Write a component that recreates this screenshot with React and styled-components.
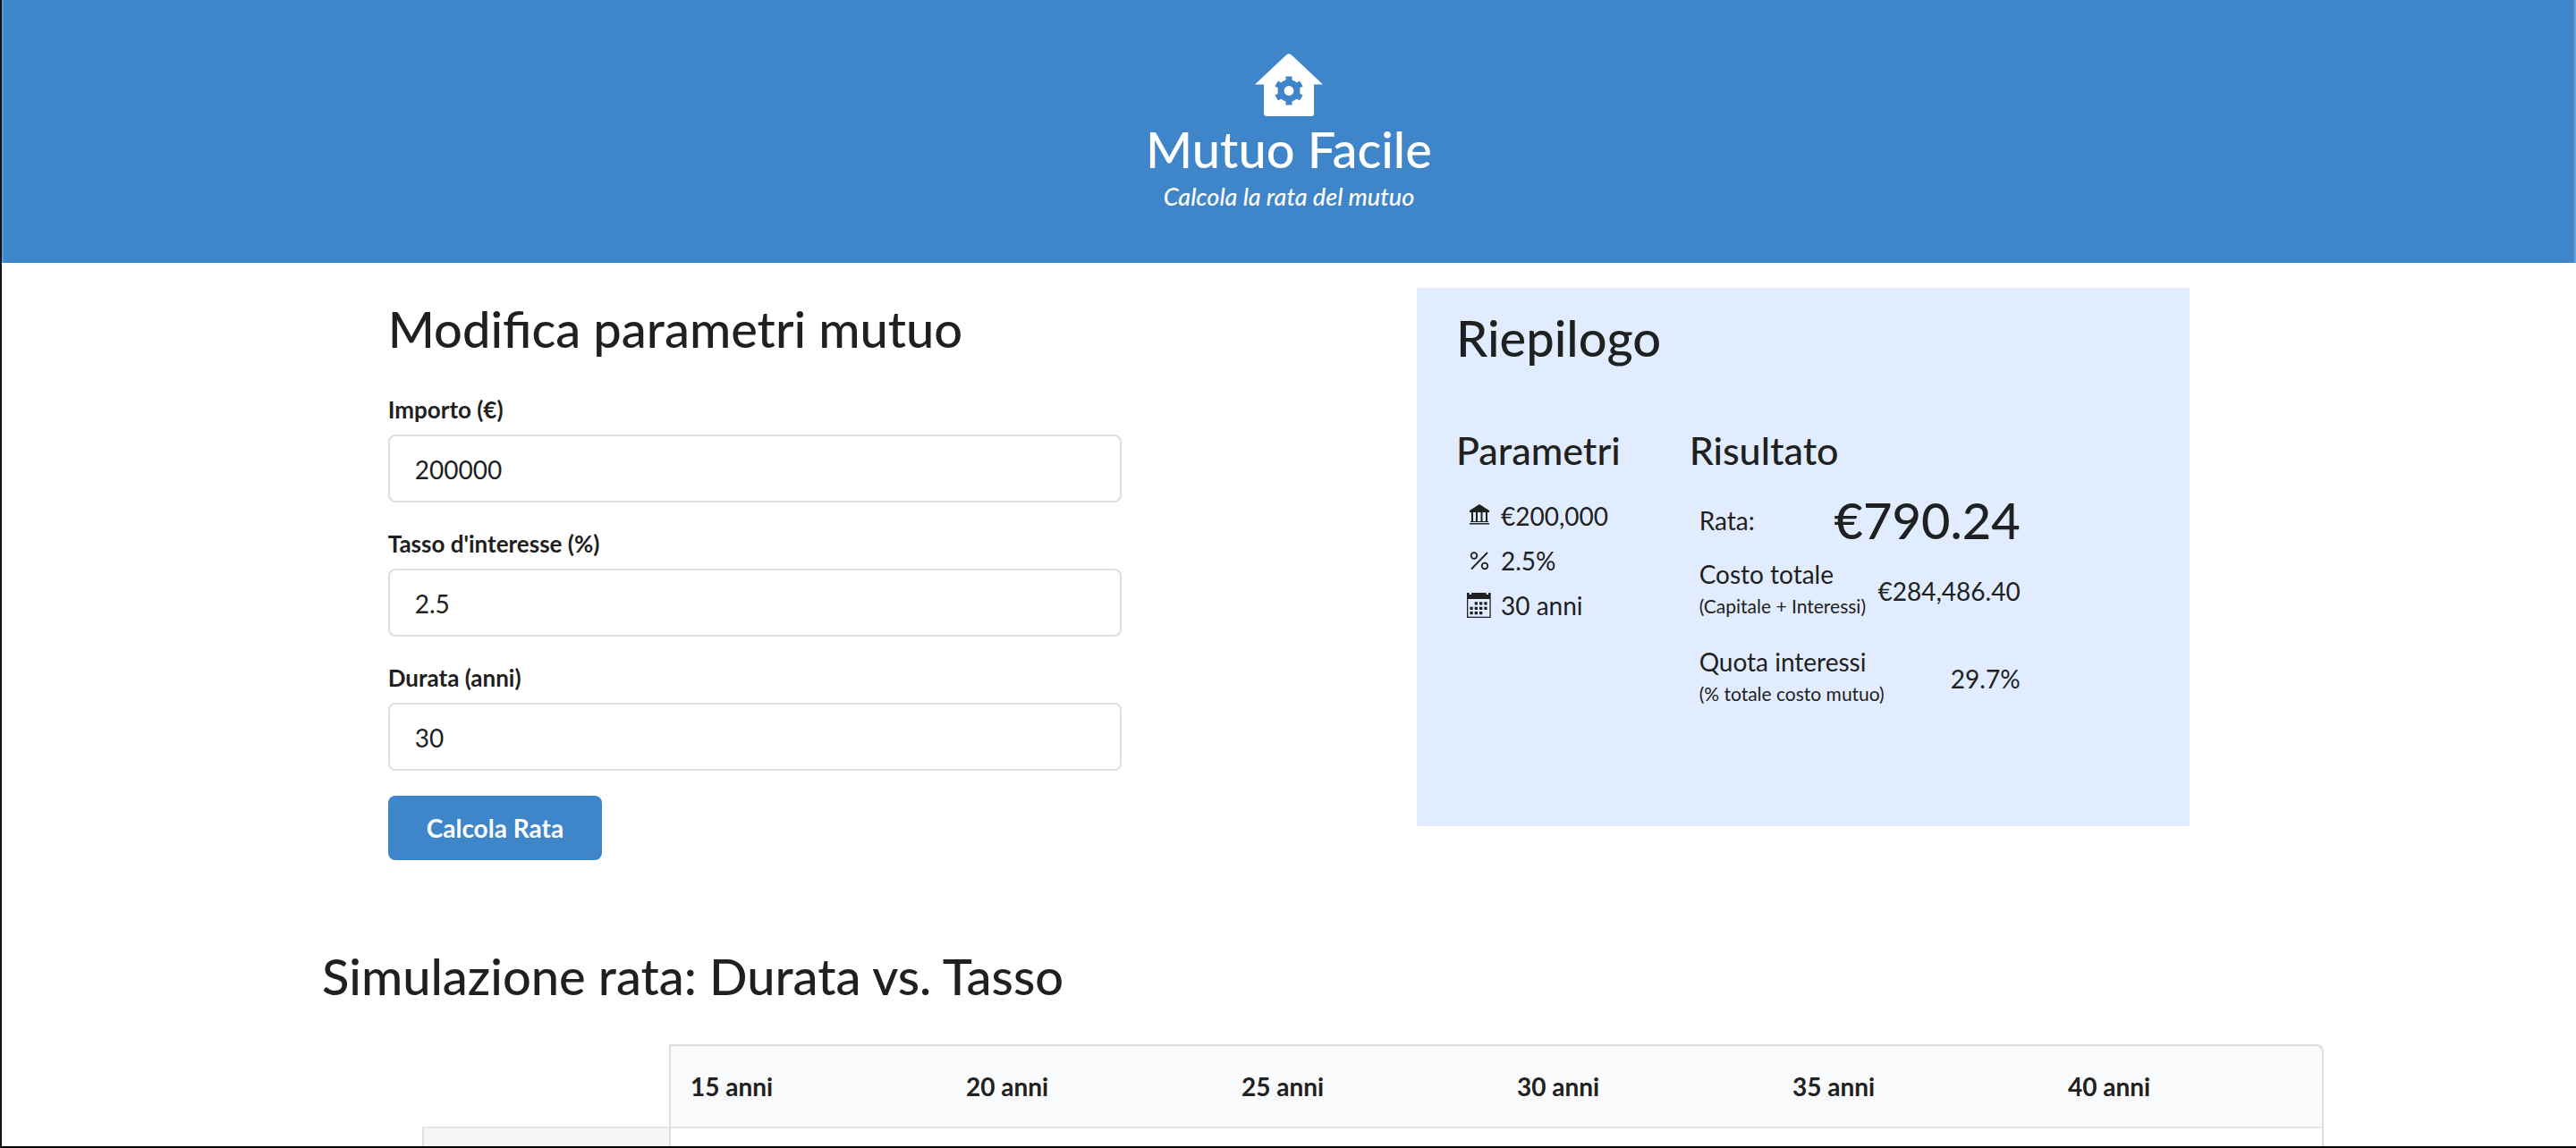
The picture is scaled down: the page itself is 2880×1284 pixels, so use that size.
import React from 'react';
import styled, { createGlobalStyle } from 'styled-components';

const Global = createGlobalStyle`
  *, *::before, *::after { box-sizing: border-box; }
  body {
    margin: 0;
    background: #fff;
    color: #1f2121;
    font-family: Lato, 'Helvetica Neue', Arial, sans-serif;
    font-size: 28px;
    line-height: 40px;
  }
`;

const Frame = styled.div`
  height: 100vh;
  overflow: hidden;
  border-left: 2px solid #10161f;
  border-bottom: 2px solid #000;
`;

const Header = styled.header`
  display: flex;
  flex-direction: column;
  align-items: center;
  padding: 56px 0;
  background: #3f85ca;
  border-left: 2px solid #5d98d2;
  border-right: 2px solid #6ba1d8;
  color: #fff;
`;

const Logo = styled.svg`
  width: 76px;
  height: 76px;
`;

const Title = styled.h1`
  margin: 0;
  font-size: 56px;
  line-height: 70px;
  font-weight: 500;
`;

const Tagline = styled.p`
  margin: 0;
  font-size: 27px;
  line-height: 36px;
  font-style: italic;
  font-weight: 500;
`;

const Overview = styled.main`
  display: grid;
  grid-template-columns: 820fr 864fr;
  column-gap: 330px;
  align-items: start;
  padding: 28px 15% 0;
`;

const Heading = styled.h2`
  margin: 0;
  font-size: 56px;
  line-height: 72px;
  font-weight: 500;
`;

const Form = styled.form`
  padding-top: 10px;
`;

const Field = styled.div`
  display: flex;
  flex-direction: column;
  gap: 10px;
  margin-bottom: 28px;
  &:first-of-type { margin-top: 36px; }
`;

const Label = styled.label`
  font-size: 26px;
  line-height: 36px;
  font-weight: 700;
`;

const Input = styled.input`
  width: 100%;
  height: 76px;
  padding: 2px 28px 0;
  border: 2px solid #dededf;
  border-radius: 8px;
  background: #fff;
  color: inherit;
  font: inherit;
`;

const Button = styled.button`
  height: 72px;
  padding: 0 43px;
  border: 0;
  border-radius: 8px;
  background: #3f85ca;
  color: #fff;
  font: inherit;
  font-weight: 700;
`;

const Card = styled.section`
  padding: 20px 44px 116px;
  background: #e1edff;
`;

const CardColumns = styled.div`
  display: flex;
  gap: 77px;
  margin-top: 62px;
`;

const SubHeading = styled.h3`
  margin: 0 0 20px;
  font-size: 43px;
  line-height: 56px;
  font-weight: 500;
`;

const ParamList = styled.ul`
  margin: 0;
  padding: 0 0 0 10px;
  list-style: none;
`;

const Param = styled.li`
  display: flex;
  align-items: center;
  gap: 10px;
  line-height: 50px;
`;

const Icon = styled.svg`
  width: 30px;
  height: 30px;
  fill: currentColor;
`;

const Results = styled.dl`
  width: 370px;
  margin: 0;
  padding-left: 11px;
`;

const Result = styled.div`
  display: flex;
  align-items: center;
  justify-content: space-between;
  height: ${(p) => (p.$large ? '60px' : '98px')};
  white-space: nowrap;
`;

const ResultName = styled.dt`
  line-height: 34px;
`;

const ResultValue = styled.dd`
  margin: 0;
  font-size: ${(p) => (p.$large ? '56px' : '28px')};
  line-height: 56px;
  font-weight: ${(p) => (p.$large ? 500 : 400)};
`;

const Note = styled.small`
  display: block;
  font-size: 21px;
  line-height: 38px;
`;

const Simulation = styled.section`
  padding: 94px 282px 0 358px;
`;

const Rates = styled.table`
  width: calc(100% - 112px);
  margin: 40px 0 0 112px;
  border-collapse: separate;
  border-spacing: 0;
  table-layout: fixed;
`;

const Corner = styled.td`
  width: 278px;
  border-right: 2px solid #dededf;
`;

const Term = styled.th`
  height: 92px;
  padding: 0 22px;
  border-top: 2px solid #dededf;
  background: #f9fafb;
  text-align: left;
  font-weight: 700;
  &:last-child {
    border-right: 2px solid #dededf;
    border-top-right-radius: 8px;
  }
`;

const RateName = styled.th`
  height: 92px;
  border: 2px solid #dededf;
  border-top-color: #e6e6e6;
  border-bottom: 0;
  background: #f6f6f6;
`;

const Rate = styled.td`
  border-top: 2px solid #e4e5e6;
  &:last-child { border-right: 2px solid #dededf; }
`;

const HouseGear = () => (
  <Logo viewBox="0 0 76 76" aria-hidden="true">
    <path
      fill="#fff"
      d="M0 38.5 35 5.6Q38 3 41 5.6L76 38.5H66V71Q66 74 63 74H13Q10 74 10 71V38.5Z"
    />
    <g fill="#3f85ca">
      <circle cx="38" cy="45.5" r="12.5" />
      {[0, 60, 120].map((a) => (
        <rect key={a} x="34.5" y="29.5" width="7" height="32" transform={`rotate(${a} 38 45.5)`} />
      ))}
    </g>
    <circle cx="38" cy="45.5" r="5.4" fill="#fff" />
  </Logo>
);

const Bank = () => (
  <Icon viewBox="0 0 30 30" aria-hidden="true">
    <path d="M16 2 27 9V11H5V9ZM7 11H9V22H7ZM12 11H14V22H12ZM17.500 11H19.500V22H17.500ZM23 11H25V22H23ZM6 21H26V22H6ZM5 23H27V24.500H5Z" />
  </Icon>
);

const Percent = () => (
  <Icon viewBox="0 0 30 30" aria-hidden="true">
    <g fill="none" stroke="currentColor" strokeWidth="1.8">
      <circle cx="10" cy="9.500" r="3.3" />
      <circle cx="22" cy="21" r="3.3" />
      <path d="M25 6 7 24.500" />
    </g>
  </Icon>
);

const Calendar = () => (
  <Icon viewBox="0 0 30 30" aria-hidden="true">
    <path
      fillRule="evenodd"
      d="M2 1H4.700V3H7V1H23.700V3H26V1H28.700V29H2ZM3.300 8V27.700H27.400V8Z"
    />
    <path d="M10.700 11.300H14V14.600H10.700ZM16 11.300H19.300V14.600H16ZM21.300 11.300H24.600V14.600H21.300ZM5.400 16.700H8.700V20H5.400ZM10.700 16.700H14V20H10.700ZM16 16.700H19.300V20H16ZM21.300 16.700H24.600V20H21.300ZM5.400 22H8.700V25.300H5.400ZM10.700 22H14V25.300H10.700ZM16 22H19.300V25.300H16Z" />
  </Icon>
);

const fields = [
  { id: 'importo', label: 'Importo (€)', value: '200000' },
  { id: 'tasso', label: "Tasso d'interesse (%)", value: '2.5' },
  { id: 'durata', label: 'Durata (anni)', value: '30' },
];

const params = [
  { icon: Bank, text: '€200,000' },
  { icon: Percent, text: '2.5%' },
  { icon: Calendar, text: '30 anni' },
];

const results = [
  { name: 'Rata:', value: '€790.24', large: true },
  { name: 'Costo totale', note: '(Capitale + Interessi)', value: '€284,486.40' },
  { name: 'Quota interessi', note: '(% totale costo mutuo)', value: '29.7%' },
];

const terms = [15, 20, 25, 30, 35, 40];

export default function App() {
  return (
    <>
      <Global />
      <Frame>
        <Header>
          <HouseGear />
          <Title>Mutuo Facile</Title>
          <Tagline>Calcola la rata del mutuo</Tagline>
        </Header>

        <Overview>
          <Form onSubmit={(e) => e.preventDefault()}>
            <Heading>Modifica parametri mutuo</Heading>
            {fields.map((f) => (
              <Field key={f.id}>
                <Label htmlFor={f.id}>{f.label}</Label>
                <Input id={f.id} type="text" inputMode="decimal" defaultValue={f.value} />
              </Field>
            ))}
            <Button type="submit">Calcola Rata</Button>
          </Form>

          <Card>
            <Heading>Riepilogo</Heading>
            <CardColumns>
              <div>
                <SubHeading>Parametri</SubHeading>
                <ParamList>
                  {params.map(({ icon: Glyph, text }) => (
                    <Param key={text}>
                      <Glyph />
                      {text}
                    </Param>
                  ))}
                </ParamList>
              </div>
              <div>
                <SubHeading>Risultato</SubHeading>
                <Results>
                  {results.map((r) => (
                    <Result key={r.name} $large={r.large}>
                      <ResultName>
                        {r.name}
                        {r.note && <Note>{r.note}</Note>}
                      </ResultName>
                      <ResultValue $large={r.large}>{r.value}</ResultValue>
                    </Result>
                  ))}
                </Results>
              </div>
            </CardColumns>
          </Card>
        </Overview>

        <Simulation>
          <Heading>Simulazione rata: Durata vs. Tasso</Heading>
          <Rates>
            <thead>
              <tr>
                <Corner />
                {terms.map((t) => (
                  <Term key={t} scope="col">{t} anni</Term>
                ))}
              </tr>
            </thead>
            <tbody>
              <tr>
                <RateName scope="row" />
                {terms.map((t) => (
                  <Rate key={t} />
                ))}
              </tr>
            </tbody>
          </Rates>
        </Simulation>
      </Frame>
    </>
  );
}
